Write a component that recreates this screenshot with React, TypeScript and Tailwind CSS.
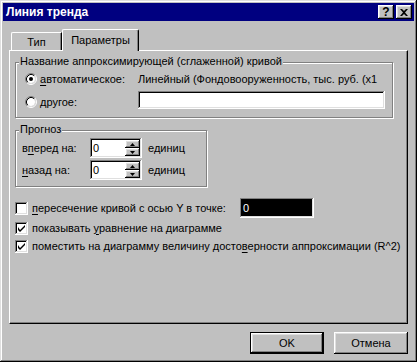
import type { ReactNode } from 'react'

const raised =
  'shadow-[inset_-1px_-1px_#000,inset_1px_1px_#fff,inset_-2px_-2px_#808080,inset_2px_2px_#dfdfdf]'
const sunken =
  'shadow-[inset_-1px_-1px_#fff,inset_1px_1px_#808080,inset_-2px_-2px_#dfdfdf,inset_2px_2px_#000]'
const etched = 'border border-[#808080] shadow-[inset_1px_1px_#fff,1px_1px_#fff]'

function Key({ children }: { children: ReactNode }) {
  return <span className="underline decoration-1 underline-offset-2">{children}</span>
}

function Radio({ checked = false }: { checked?: boolean }) {
  return (
    <svg width="12" height="12" viewBox="0 0 12 12" className="shrink-0">
      <circle cx="6" cy="6" r="4" fill="#fff" />
      <path d="M2.11 9.89A5.5 5.5 0 0 1 9.89 2.11" stroke="#808080" fill="none" />
      <path d="M9.89 2.11A5.5 5.5 0 0 1 2.11 9.89" stroke="#fff" fill="none" />
      <path d="M2.82 9.18A4.5 4.5 0 0 1 9.18 2.82" stroke="#000" fill="none" />
      <path d="M9.18 2.82A4.5 4.5 0 0 1 2.82 9.18" stroke="#dfdfdf" fill="none" />
      {checked ? <circle cx="6" cy="6" r="2" fill="#000" /> : null}
    </svg>
  )
}

function Check({ checked = false }: { checked?: boolean }) {
  return (
    <div className={`flex h-[13px] w-[13px] shrink-0 items-center justify-center bg-white ${sunken}`}>
      {checked ? (
        <svg width="7" height="7" viewBox="0 0 7 7">
          <path d="M0 2v3l2 2 5-5V0L2 5z" fill="#000" />
        </svg>
      ) : null}
    </div>
  )
}

function SpinButton({ up }: { up?: boolean }) {
  return (
    <div className={`flex h-[8px] w-[15px] items-center justify-center bg-[#c0c0c0] ${raised}`}>
      <svg width="5" height="3" viewBox="0 0 5 3">
        <path d={up ? 'M2.5 0L5 3H0z' : 'M0 0h5L2.5 3z'} fill="#000" />
      </svg>
    </div>
  )
}

function SpinRow({ label, className = '' }: { label: ReactNode; className?: string }) {
  return (
    <div className={`flex h-[20px] items-center ${className}`}>
      <span className="w-[68px]">{label}</span>
      <div className={`flex h-[20px] w-[52px] bg-white p-[2px] ${sunken}`}>
        <span className="flex-1 pl-[1px] leading-[16px]">0</span>
        <div className="flex flex-col">
          <SpinButton up />
          <SpinButton />
        </div>
      </div>
      <span className="ml-[6px]">единиц</span>
    </div>
  )
}

export default function App() {
  return (
    <div
      className={`flex h-[362px] w-[417px] flex-col bg-[#c0c0c0] p-[3px] font-['Liberation_Sans',Arial,sans-serif] text-[11px] leading-[13px] text-black shadow-[inset_-1px_-1px_#000,inset_1px_1px_#dfdfdf,inset_-2px_-2px_#808080,inset_2px_2px_#fff]`}
    >
      <div className="flex h-[18px] items-center justify-between bg-[#000080] pl-[3px] pr-[2px]">
        <span className="text-[12px] font-bold text-white">Линия тренда</span>
        <div className="flex gap-[2px]">
          <div className={`flex h-[14px] w-[16px] items-center justify-center bg-[#c0c0c0] text-[12px] font-bold ${raised}`}>
            ?
          </div>
          <div className={`flex h-[14px] w-[16px] items-center justify-center bg-[#c0c0c0] ${raised}`}>
            <svg width="8" height="7" viewBox="0 0 8 7">
              <path d="M0 0h2l2 2 2-2h2L5 3.5 8 7H6L4 5 2 7H0l3-3.5z" fill="#000" />
            </svg>
          </div>
        </div>
      </div>

      <div className="flex flex-1 flex-col px-[6px] pt-[8px]">
        <div className="flex h-[21px] items-end pl-[2px]">
          <div className="h-[18px] w-[51px] rounded-tl-[2px] border-l border-t border-white pt-[3px] text-center shadow-[inset_-1px_0_#808080] border-r border-r-black">
            Тип
          </div>
          <div className="relative z-10 -mb-px h-[22px] w-[77px] rounded-t-[2px] border-l border-t border-white border-r border-r-black bg-[#c0c0c0] pt-[4px] text-center shadow-[inset_-1px_0_#808080]">
            Параметры
          </div>
        </div>

        <div className="flex h-[274px] flex-col border border-white border-b-black border-r-black pl-[5px] pt-[11px] shadow-[inset_-1px_-1px_#808080]">
          <div className={`relative h-[56px] w-[378px] pl-[9px] pt-[7px] ${etched}`}>
            <span className="absolute -top-[8px] left-[3px] bg-[#c0c0c0] px-[1px]">
              Название аппроксимирующей (сглаженной) кривой
            </span>
            <div className="flex h-[18px] items-center">
              <div className="flex w-[113px] items-center">
                <Radio checked />
                <span className="ml-[3px]">
                  <Key>а</Key>втоматическое:
                </span>
              </div>
              <span>Линейный (Фондовооруженность, тыс. руб. (x1</span>
            </div>
            <div className="mt-[3px] flex h-[18px] items-center">
              <div className="mt-[4px] flex w-[113px] items-center">
                <Radio />
                <span className="ml-[3px]">
                  <Key>д</Key>ругое:
                </span>
              </div>
              <div className={`h-[18px] w-[247px] bg-white ${sunken}`} />
            </div>
          </div>

          <div className={`relative mt-[12px] h-[57px] w-[192px] pl-[6px] pt-[7px] ${etched}`}>
            <span className="absolute -top-[8px] left-[3px] bg-[#c0c0c0] px-[1px]">Прогноз</span>
            <SpinRow
              label={
                <>
                  в<Key>п</Key>еред на:
                </>
              }
            />
            <SpinRow
              className="mt-[2px]"
              label={
                <>
                  <Key>н</Key>азад на:
                </>
              }
            />
          </div>

          <div className="mt-[11px] flex h-[20px] items-center">
            <Check />
            <span className="ml-[4px] w-[208px]">
              <Key>п</Key>ересечение кривой с осью Y в точке:
            </span>
            <div className={`h-[20px] w-[74px] bg-black pl-[3px] leading-[20px] text-white ${sunken}`}>0</div>
          </div>
          <div className="mt-[1px] flex h-[18px] items-center">
            <Check checked />
            <span className="ml-[4px]">
              показывать <Key>у</Key>равнение на диаграмме
            </span>
          </div>
          <div className="flex h-[18px] items-center">
            <Check checked />
            <span className="ml-[4px]">
              поместить на диаграмму величину досто<Key>в</Key>ерности аппроксимации (R^2)
            </span>
          </div>
        </div>

        <div className="mt-[8px] flex justify-end gap-[10px]">
          <button className={`h-[22px] w-[74px] border border-black bg-[#c0c0c0] ${raised}`}>OK</button>
          <button className={`h-[22px] w-[74px] bg-[#c0c0c0] ${raised}`}>Отмена</button>
        </div>
      </div>
    </div>
  )
}
